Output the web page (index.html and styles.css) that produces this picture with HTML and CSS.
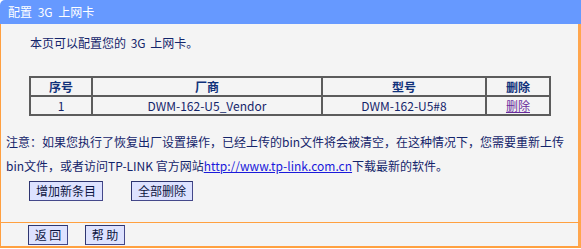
FILE: index.html
```html
<!DOCTYPE html>
<html lang="zh-CN">
<head>
<meta charset="utf-8">
<title>配置 3G 上网卡</title>
<link rel="stylesheet" href="styles.css">
</head>
<body>
<div class="panel">
  <div class="head">配置 3G 上网卡</div>
  <div class="main">
    <p class="intro">本页可以配置您的 3G 上网卡。</p>
    <table class="list">
      <colgroup>
        <col class="c-no"><col class="c-vendor"><col class="c-model"><col class="c-del">
      </colgroup>
      <thead>
        <tr><th>序号</th><th>厂商</th><th>型号</th><th>删除</th></tr>
      </thead>
      <tbody>
        <tr><td>1</td><td>DWM-162-U5_Vendor</td><td>DWM-162-U5#8</td><td><a class="del" href="#">删除</a></td></tr>
      </tbody>
    </table>
    <p class="note">注意：如果您执行了恢复出厂设置操作，已经上传的bin文件将会被清空，在这种情况下，您需要重新上传<br>bin文件，或者访问TP-LINK 官方网站<a class="url" href="#">http://www.tp-link.com.cn</a>下载最新的软件。</p>
    <div class="actions">
      <button class="btn" type="button">增加新条目</button>
      <button class="btn" type="button">全部删除</button>
    </div>
  </div>
  <div class="foot">
    <button class="btn btn-sm" type="button">返 回</button>
    <button class="btn btn-sm" type="button">帮 助</button>
  </div>
</div>
</body>
</html>
```
FILE: styles.css
```css
html, body {
  margin: 0;
  padding: 0;
  background: #ffffff;
}

body {
  font-family: "Noto Sans CJK SC", "Liberation Sans", sans-serif;
  font-size: 12px;
  color: #14256b;
}

.panel {
  width: 581px;
}

.head {
  height: 24px;
  line-height: 24px;
  background: #6699ff;
  color: #ffffff;
  padding-left: 8px;
  border-top-left-radius: 5px;
  word-spacing: 3px;
}

.main {
  box-sizing: border-box;
  height: 198px;
  background: #f4f4f4;
  border-left: 1px solid #ff9f40;
  border-right: 3px solid #ffa64d;
  display: flex;
  flex-direction: column;
  align-items: flex-start;
}

.intro {
  margin: 10px 0 0 29px;
  line-height: 18px;
  word-spacing: 2px;
}

.list {
  margin: 24px 0 0 28px;
  width: 520px;
  border-collapse: collapse;
  border: 2px solid #5c5c5c;
  table-layout: fixed;
}

.c-no { width: 62px; }
.c-vendor { width: 230px; }
.c-model { width: 164px; }
.c-del { width: 64px; }

.list th,
.list td {
  border: 2px solid #5c5c5c;
  height: 17px;
  line-height: 17px;
  padding: 0;
  text-align: center;
  font-weight: normal;
  color: #14256b;
}

.list th {
  font-weight: bold;
  color: #10317a;
}

.del {
  color: #6a2c9c;
  text-decoration: underline;
}

.note {
  margin: 14px 0 0 5px;
  line-height: 24px;
  white-space: nowrap;
}

.url {
  color: #1a1adb;
  text-decoration: underline;
}

.actions {
  margin: 3px 0 0 28px;
  display: flex;
  gap: 28px;
}

.btn {
  box-sizing: border-box;
  height: 20px;
  padding: 0 6px;
  margin: 0;
  font-family: "Noto Sans CJK SC", "Liberation Sans", sans-serif;
  font-size: 12px;
  line-height: 18px;
  color: #0c1440;
  background: #dde2ff;
  border: 1px solid #2e3570;
  border-right-color: #44488a;
  border-bottom-color: #44488a;
  border-radius: 0;
}

.foot {
  box-sizing: border-box;
  height: 26px;
  background: #f4f4f4;
  border-top: 1px solid #ffa040;
  border-left: 1px solid #ff9f40;
  border-right: 3px solid #ffa64d;
  border-bottom: 2px solid #ffa040;
  padding: 2px 0 0 27px;
  display: flex;
  align-items: flex-start;
  gap: 17px;
}

.btn-sm {
  width: 40px;
  padding: 0;
  text-align: center;
}
```
